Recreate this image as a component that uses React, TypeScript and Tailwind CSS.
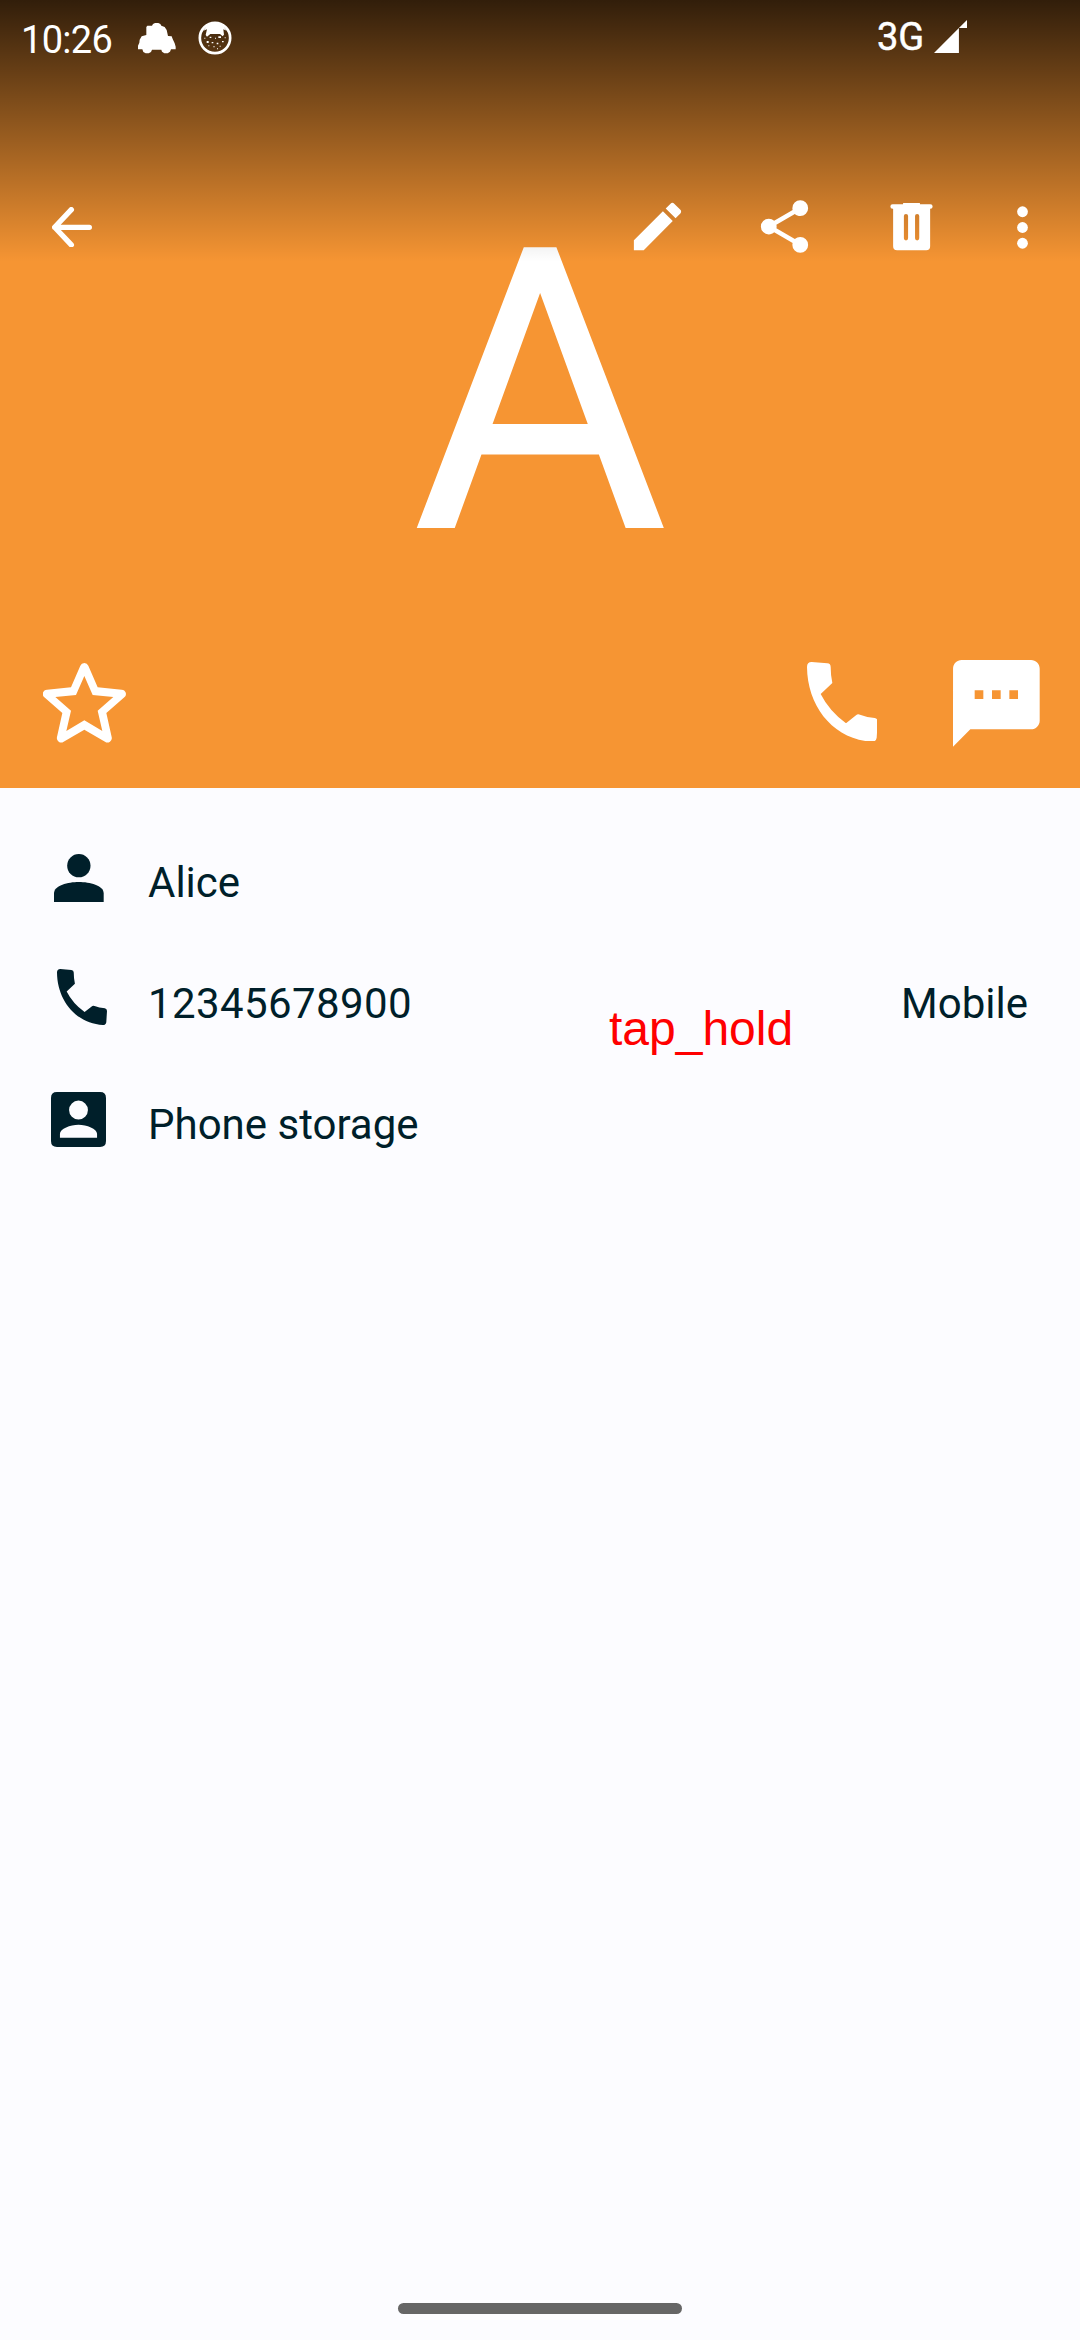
import type { ReactNode } from "react";

type IconProps = { className: string };

function Icon({ className, viewBox, children }: { className: string; viewBox: string; children: ReactNode }) {
  return (
    <svg className={`block shrink-0 ${className}`} viewBox={viewBox} fill="currentColor" preserveAspectRatio="none" aria-hidden="true">
      {children}
    </svg>
  );
}

const CarIcon = ({ className }: IconProps) => (
  <Icon className={className} viewBox="415 68 114 93">
    <path d="M415 147V136L419 127L420 118L426 108L440 104V80L443 76H457L460 71L466 68H476L482 71L485 76L495 80L501 89L505 107L516 108L519 116L525 129L528 139V147H514L511 154L504 159H494L487 154L485 148H457L454 155L447 159H438L431 155L428 147Z" />
  </Icon>
);

const CatBadgeIcon = ({ className }: IconProps) => (
  <Icon className={className} viewBox="594 63 102 102">
    <circle cx="645" cy="114" r="45.5" fill="none" stroke="currentColor" strokeWidth="8" />
    <path d="M610 92Q624 68 645 68T680 92L670 88L672 104L668 109L660 102H631L621 110L617 105L621 88Z" />
    <path d="M645 113h3v3h-3zM655 109h8v5h-8zM629 110h5v4h-5zM620 123h6v6h-6zM635 126h5v4h-5zM650 128h5v5h-5zM666 123h5v4h-5zM613 113h3v3h-3zM674 112h3v3h-3zM625 136h3v3h-3zM640 139h4v3h-4zM659 137h3v3h-3zM651 145h3v3h-3z" />
  </Icon>
);

const SignalIcon = ({ className }: IconProps) => (
  <Icon className={className} viewBox="253 61 98 98">
    <path d="M253 159L327 85V159ZM327 85L351 61V85Z" />
  </Icon>
);

const BackIcon = ({ className }: IconProps) => (
  <Icon className={className} viewBox="0 0 120 122">
    <path d="M58 8L8 61L58 114M8 61H112" fill="none" stroke="currentColor" strokeWidth="16" strokeLinecap="round" strokeLinejoin="round" />
  </Icon>
);

const EditIcon = ({ className }: IconProps) => (
  <Icon className={className} viewBox="0 0 24 24">
    <path d="M3 17.25V21h3.75L17.81 9.94l-3.75-3.75L3 17.25zM20.71 7.04c.39-.39.39-1.02 0-1.41l-2.34-2.34c-.39-.39-1.02-.39-1.41 0l-1.83 1.83 3.75 3.75 1.83-1.83z" />
  </Icon>
);

const ShareIcon = ({ className }: IconProps) => (
  <Icon className={className} viewBox="0 0 24 24">
    <path d="M18 22q-1.25 0-2.125-.875T15 19q0-.175.025-.363t.075-.337l-7.05-4.1q-.425.375-.95.588T6 15q-1.25 0-2.125-.875T3 12t.875-2.125T6 9q.575 0 1.1.213t.95.587l7.05-4.1q-.05-.15-.075-.337T15 5q0-1.25.875-2.125T18 2t2.125.875T21 5t-.875 2.125T18 8q-.575 0-1.1-.212t-.95-.588L8.9 11.3q.05.15.075.338T9 12t-.025.363-.075.337l7.05 4.1q.425-.375.95-.587T18 16q1.25 0 2.125.875T21 19t-.875 2.125T18 22" />
  </Icon>
);

const TrashIcon = ({ className }: IconProps) => (
  <Icon className={className} viewBox="0 0 24 24">
    <path
      fillRule="evenodd"
      d="M8.8 3h6.4v.5h4a.85.85 0 0 1 0 1.7H19.1V19.5a1.5 1.5 0 0 1-1.5 1.5H6.5A1.5 1.5 0 0 1 5 19.5V5.2H4.8a.85.85 0 0 1 0-1.7h4ZM9.1 8v8.5a.8.8 0 0 0 1.6 0V8a.8.8 0 0 0-1.6 0ZM13.35 8v8.5a.8.8 0 0 0 1.6 0V8a.8.8 0 0 0-1.6 0Z"
    />
  </Icon>
);

const MoreIcon = ({ className }: IconProps) => (
  <Icon className={className} viewBox="0 0 24 24">
    <circle cx="12" cy="6" r="2.05" />
    <circle cx="12" cy="12" r="2.05" />
    <circle cx="12" cy="18" r="2.05" />
  </Icon>
);

const StarIcon = ({ className }: IconProps) => (
  <Icon className={className} viewBox="128 69 249 240">
    <path
      fillRule="evenodd"
      d="M240 77A13 13 0 0 1 264 77L292 142L364 149A13 13 0 0 1 372 172L318 219L334 291A13 13 0 0 1 314 305L252 269L190 305A13 13 0 0 1 170 291L186 219L132 172A13 13 0 0 1 140 149L212 142ZM252 108L277 165L339 171L292 212L306 273L252 241L198 273L212 212L165 171L227 165Z"
    />
  </Icon>
);

const PhoneIcon = ({ className }: IconProps) => (
  <Icon className={className} viewBox="79 65 212 239">
    <path d="M93 65L140 69Q150 70 150 80Q150 105 155 128L120 161Q145 211 196 249L226 225Q231 220 238 223Q258 231 282 233Q291 235 291 244L288 292Q286 304 274 304C160 298 80 200 79 80Q79 65 93 65Z" />
  </Icon>
);

const MessageIcon = ({ className }: IconProps) => (
  <Icon className={className} viewBox="2 2 20 20">
    <path d="M20 2H4c-1.1 0-1.99.9-1.99 2L2 22l4-4h14c1.1 0 2-.9 2-2V4c0-1.1-.9-2-2-2zM9 11H7V9h2v2zm4 0h-2V9h2v2zm4 0h-2V9h2v2z" />
  </Icon>
);

const PersonIcon = ({ className }: IconProps) => (
  <Icon className={className} viewBox="163 72 149 144">
    <circle cx="237.5" cy="107" r="35" />
    <path d="M163 216V190C163 166 205 156 237.5 156S312 166 312 190V216Z" />
  </Icon>
);

const AccountBoxIcon = ({ className }: IconProps) => (
  <Icon className={className} viewBox="154 786 166 166">
    <path
      fillRule="evenodd"
      d="M172 786H302Q320 786 320 804V934Q320 952 302 952H172Q154 952 154 934V804Q154 786 172 786ZM237 812A28.5 28.5 0 1 0 237 869A28.5 28.5 0 1 0 237 812ZM181 924H293V912C293 898 262 885 237 885S181 898 181 912Z"
    />
  </Icon>
);

type DetailRowProps = { icon: ReactNode; label: string; note?: string; labelClass?: string };

function DetailRow({ icon, label, note, labelClass = "" }: DetailRowProps) {
  return (
    <div className="flex h-[121px] items-start">
      <div className="flex h-[72px] w-[97px] shrink-0">{icon}</div>
      <span className={`pt-[16px] ${labelClass}`}>{label}</span>
      {note && <span className="ml-auto pt-[16px]">{note}</span>}
    </div>
  );
}

export default function App() {
  return (
    <div className="relative flex h-[2340px] w-[1080px] flex-col overflow-hidden bg-[#fcfcff] font-['Roboto',sans-serif] text-[#001f2a]">
      <header className="relative flex h-[788px] shrink-0 flex-col bg-[#f69533] text-white">
        <div className="absolute inset-x-0 top-[162px] text-center text-[395px] leading-[463px]">A</div>
        <div className="absolute inset-x-0 top-0 h-[262px] bg-linear-to-b from-black/80 to-transparent" />

        <div className="relative flex h-[76px] items-center pl-[21px]">
          <span className="w-[117px] pt-[3px] text-[38px] leading-[44px] tracking-[-0.7px]">10:26</span>
          <CarIcon className="h-[31px] w-[38px]" />
          <CatBadgeIcon className="ml-[22px] h-[34px] w-[34px]" />
          <span className="-mt-[2px] ml-[645px] w-[57px] text-[38px] leading-[44px] [-webkit-text-stroke:0.5px_white]">3G</span>
          <SignalIcon className="-mt-[3px] h-[33px] w-[33px]" />
        </div>

        <div className="relative mt-[119px] flex h-[63px] items-center pr-[26px] pl-[52px]">
          <BackIcon className="mt-px h-[40.6px] w-[40px]" />
          <EditIcon className="ml-auto h-[63px] w-[63px]" />
          <ShareIcon className="ml-[64px] h-[63px] w-[63px]" />
          <TrashIcon className="ml-[64px] h-[63px] w-[63px]" />
          <MoreIcon className="mt-[2px] ml-[48px] h-[63px] w-[63px]" />
        </div>

        <div className="relative mt-auto flex h-[128px] items-start pr-[40.5px] pl-[42.7px]">
          <StarIcon className="mt-[3px] h-[80px] w-[83px]" />
          <PhoneIcon className="mt-[1.7px] ml-auto h-[79.7px] w-[70.7px]" />
          <MessageIcon className="mt-[0.3px] ml-[75.6px] h-[86.7px] w-[86.7px]" />
        </div>
      </header>

      <main className="relative flex flex-col pt-[54px] pr-[52px] pl-[51px] text-[42px] leading-[49px]">
        <DetailRow icon={<PersonIcon className="mt-[12px] ml-[3.3px] h-[48px] w-[49.7px]" />} label="Alice" />
        <DetailRow
          icon={<PhoneIcon className="mt-[6px] ml-[5.7px] h-[56px] w-[50px]" />}
          label="12345678900"
          labelClass="tracking-[0.4px]"
          note="Mobile"
        />
        <DetailRow icon={<AccountBoxIcon className="mt-[8px] ml-[0.3px] h-[55px] w-[55px]" />} label="Phone storage" />
        <span className="absolute top-[213px] left-[609px] font-['Liberation_Sans',Arial,sans-serif] text-[48px] leading-[55px] text-[#ff0000]">
          tap_hold
        </span>
      </main>

      <div className="mx-auto mt-auto mb-[26px] h-[11px] w-[284px] shrink-0 rounded-full bg-[#666666]" />
    </div>
  );
}
